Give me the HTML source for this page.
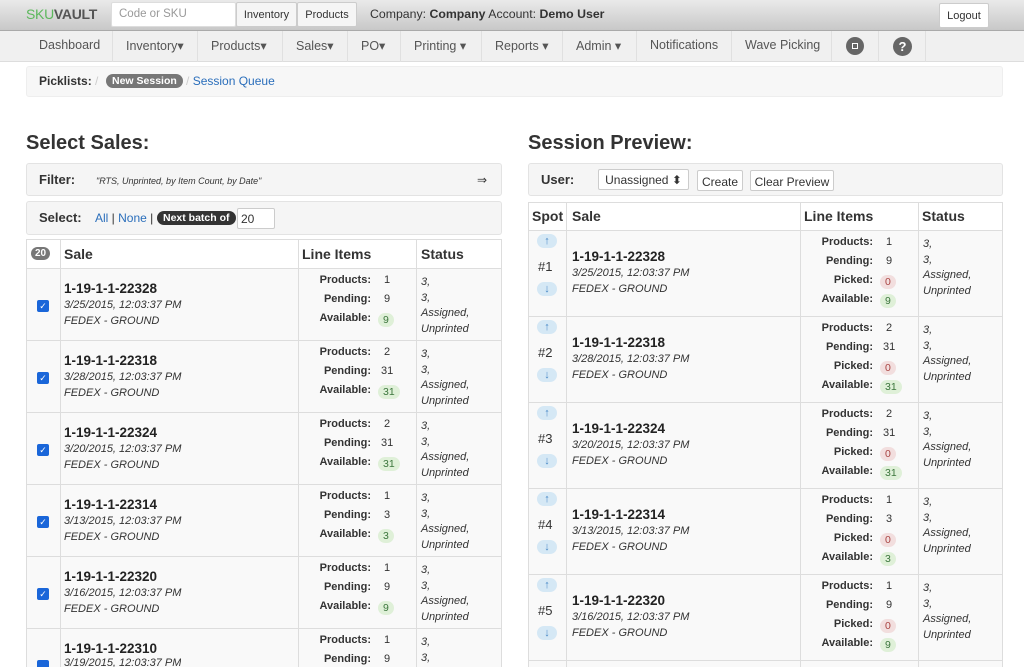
<!DOCTYPE html>
<html style="overflow:hidden;height:667px"><head><meta charset="utf-8"><style>
*{box-sizing:border-box;margin:0;padding:0}
body{width:1024px;height:667px;overflow:hidden;background:#fff;font-family:"Liberation Sans",Arial,sans-serif;color:#333;position:relative;font-size:12px}
#w{position:absolute;left:0;top:0;width:1024px;height:667px;overflow:hidden}
.a{position:absolute;white-space:nowrap}
.top{position:absolute;left:0;top:0;width:1024px;height:31px;background:linear-gradient(#eaeaea,#c8c8c8);border-bottom:1px solid #aaa}
.nav{position:absolute;left:0;top:31px;width:1024px;height:31px;background:#f0f0f0;border-bottom:1px solid #ddd}
.nav span{position:absolute;top:7px;font-size:12.5px;color:#555}
.sep{position:absolute;top:31px;width:1px;height:31px;background:#e0e0e0}
.btn{position:absolute;background:#fff;border:1px solid #ccc;font-size:11px;color:#333;text-align:center;border-radius:2px}
.well{position:absolute;background:#f5f5f5;border:1px solid #e3e3e3;border-radius:3px}
.tbl{position:absolute;border:1px solid #ddd;border-bottom:none;background:#fff}
.row{position:absolute;background:#f9f9f9;border-top:1px solid #ddd}
.vl{position:absolute;width:1px;background:#ddd}
.id{font-size:13.5px;font-weight:bold;color:#222}
.it{font-style:italic;font-size:11px;color:#333}
.lb{font-weight:bold;font-size:11px;text-align:right;width:80px}
.v{font-size:11px}
.g{background:#dff0d8;color:#3c763d;border-radius:8px;padding:1px 5px;font-size:10.5px}
.r{background:#f2dede;color:#a94442;border-radius:8px;padding:1px 5px;font-size:10.5px}
.cb{position:absolute;width:12px;height:12px;background:#1a66d9;border-radius:2px;color:#fff;font-size:9px;text-align:center;line-height:12px}
.ar{position:absolute;width:20px;height:14px;background:#d5e8f5;border-radius:7px;color:#4a8ac7;font-size:11px;text-align:center;line-height:14px}
h2{position:absolute;font-size:20px;font-weight:bold;color:#333}
</style></head><body><div id="w">
<div class="top"></div>
<div class="a" style="left:26px;top:6px;font-size:14px;font-weight:bold;letter-spacing:-0.3px"><span style="color:#5cb85c;font-weight:normal">SKU</span><span style="color:#555">VAULT</span></div>
<div class="btn" style="left:111px;top:2px;width:125px;height:25px;text-align:left;padding:5px 7px;color:#999;font-size:11.5px;border-color:#ddd">Code or SKU</div>
<div class="btn" style="left:236px;top:2px;width:61px;height:25px;padding-top:6px;background:#f5f5f5">Inventory</div>
<div class="btn" style="left:297px;top:2px;width:60px;height:25px;padding-top:6px;background:#f5f5f5">Products</div>
<div class="a" style="left:370px;top:7px;font-size:12.3px;color:#333">Company: <b>Company</b> Account: <b>Demo User</b></div>
<div class="btn" style="left:939px;top:3px;width:50px;height:25px;padding-top:6px">Logout</div>
<div class="nav"></div>
<div class="nav" style="background:none;border:none">
<span style="left:39px">Dashboard</span><span style="left:126px">Inventory▾</span><span style="left:211px">Products▾</span><span style="left:296px">Sales▾</span><span style="left:361px">PO▾</span><span style="left:414px">Printing ▾</span><span style="left:495px">Reports ▾</span><span style="left:576px">Admin ▾</span><span style="left:650px">Notifications</span><span style="left:745px">Wave Picking</span>
</div>
<div class="sep" style="left:112px"></div><div class="sep" style="left:197px"></div><div class="sep" style="left:282px"></div><div class="sep" style="left:347px"></div><div class="sep" style="left:400px"></div><div class="sep" style="left:481px"></div><div class="sep" style="left:562px"></div><div class="sep" style="left:636px"></div><div class="sep" style="left:731px"></div><div class="sep" style="left:831px"></div><div class="sep" style="left:878px"></div><div class="sep" style="left:925px"></div>
<div class="a" style="left:846px;top:37px;width:18px;height:18px;border-radius:50%;background:#666;"><div style="position:absolute;left:6px;top:6px;width:6px;height:6px;border:1.5px solid #fff"></div></div>
<div class="a" style="left:893px;top:37px;width:19px;height:19px;border-radius:50%;background:#666;color:#fff;font-weight:bold;font-size:13px;text-align:center;line-height:19px">?</div>
<div class="well" style="left:26px;top:66px;width:977px;height:31px;border-color:#eee;background:#f7f7f7"></div>
<div class="a" style="left:39px;top:74px;font-weight:bold;font-size:12px">Picklists: <span style="color:#ccc;font-weight:normal">/</span></div>
<div class="a" style="left:106px;top:74px;background:#777;color:#fff;font-weight:bold;font-size:10.5px;border-radius:8px;padding:1px 6px">New Session</div>
<div class="a" style="left:186px;top:74px;font-size:12px"><span style="color:#ccc">/</span> <span style="color:#2a6ebb">Session Queue</span></div>

<h2 style="left:26px;top:132px">Select Sales:</h2>
<h2 style="left:528px;top:132px">Session Preview:</h2>

<div class="well" style="left:26px;top:163px;width:476px;height:33px"></div>
<div class="a" style="left:39px;top:172px;font-size:13px;font-weight:bold">Filter:</div>
<div class="a" style="left:96px;top:176px;font-size:9px;font-style:italic">"RTS, Unprinted, by Item Count, by Date"</div>
<div class="a" style="left:477px;top:173px;font-size:12px">⇒</div>
<div class="well" style="left:26px;top:201px;width:476px;height:34px"></div>
<div class="a" style="left:39px;top:210px;font-size:13px;font-weight:bold">Select:</div>
<div class="a" style="left:95px;top:211px;font-size:12px"><span style="color:#2a6ebb">All</span> | <span style="color:#2a6ebb">None</span> |</div>
<div class="a" style="left:157px;top:211px;background:#333;color:#fff;font-weight:bold;font-size:10.5px;border-radius:8px;padding:1px 6px">Next batch of</div>
<div class="btn" style="left:237px;top:208px;width:38px;height:21px;text-align:left;padding:3px 3px;font-size:12px">20</div>

<div class="well" style="left:528px;top:163px;width:475px;height:33px"></div>
<div class="a" style="left:541px;top:172px;font-size:13px;font-weight:bold">User:</div>
<div class="btn" style="left:598px;top:169px;width:91px;height:21px;padding-top:3px;font-size:12px">Unassigned ⬍</div>
<div class="btn" style="left:697px;top:170px;width:46px;height:21px;padding-top:4px;font-size:12px">Create</div>
<div class="btn" style="left:750px;top:170px;width:84px;height:21px;padding-top:4px;font-size:12px">Clear Preview</div>

<!-- Left table -->
<div class="tbl" style="left:26px;top:239px;width:476px;height:428px"></div>
<div class="row" style="left:27px;top:268px;width:474px;height:72px"></div>
<div class="row" style="left:27px;top:340px;width:474px;height:72px"></div>
<div class="row" style="left:27px;top:412px;width:474px;height:72px"></div>
<div class="row" style="left:27px;top:484px;width:474px;height:72px"></div>
<div class="row" style="left:27px;top:556px;width:474px;height:72px"></div>
<div class="row" style="left:27px;top:628px;width:474px;height:39px"></div>
<div class="vl" style="left:60px;top:239px;height:428px"></div>
<div class="vl" style="left:298px;top:239px;height:428px"></div>
<div class="vl" style="left:416px;top:239px;height:428px"></div>
<div class="a" style="left:31px;top:247px;background:#777;color:#fff;font-weight:bold;font-size:10px;border-radius:8px;padding:1px 4px">20</div>
<div class="a" style="left:64px;top:246px;font-size:14px;font-weight:bold">Sale</div>
<div class="a" style="left:302px;top:246px;font-size:14px;font-weight:bold">Line Items</div>
<div class="a" style="left:421px;top:246px;font-size:14px;font-weight:bold">Status</div>

<div class="a" style="left:0;top:268px">
<div class="cb" style="left:37px;top:32px">✓</div>
<div class="a id" style="left:64px;top:13px">1-19-1-1-22328</div><div class="a it" style="left:64px;top:31px">3/25/2015, 12:03:37 PM</div><div class="a it" style="left:64px;top:47px">FEDEX - GROUND</div>
<div class="a lb" style="left:291px;top:6px">Products:</div><div class="a v" style="left:384px;top:6px">1</div>
<div class="a lb" style="left:291px;top:25px">Pending:</div><div class="a v" style="left:384px;top:25px">9</div>
<div class="a lb" style="left:291px;top:44px">Available:</div><div class="a" style="left:378px;top:44px"><span class="g">9</span></div>
<div class="a it" style="left:421px;top:7px;line-height:15.5px">3,<br>3,<br>Assigned,<br>Unprinted</div></div>
<div class="a" style="left:0;top:340px">
<div class="cb" style="left:37px;top:32px">✓</div>
<div class="a id" style="left:64px;top:13px">1-19-1-1-22318</div><div class="a it" style="left:64px;top:31px">3/28/2015, 12:03:37 PM</div><div class="a it" style="left:64px;top:47px">FEDEX - GROUND</div>
<div class="a lb" style="left:291px;top:6px">Products:</div><div class="a v" style="left:384px;top:6px">2</div>
<div class="a lb" style="left:291px;top:25px">Pending:</div><div class="a v" style="left:381px;top:25px">31</div>
<div class="a lb" style="left:291px;top:44px">Available:</div><div class="a" style="left:378px;top:44px"><span class="g">31</span></div>
<div class="a it" style="left:421px;top:7px;line-height:15.5px">3,<br>3,<br>Assigned,<br>Unprinted</div></div>
<div class="a" style="left:0;top:412px">
<div class="cb" style="left:37px;top:32px">✓</div>
<div class="a id" style="left:64px;top:13px">1-19-1-1-22324</div><div class="a it" style="left:64px;top:31px">3/20/2015, 12:03:37 PM</div><div class="a it" style="left:64px;top:47px">FEDEX - GROUND</div>
<div class="a lb" style="left:291px;top:6px">Products:</div><div class="a v" style="left:384px;top:6px">2</div>
<div class="a lb" style="left:291px;top:25px">Pending:</div><div class="a v" style="left:381px;top:25px">31</div>
<div class="a lb" style="left:291px;top:44px">Available:</div><div class="a" style="left:378px;top:44px"><span class="g">31</span></div>
<div class="a it" style="left:421px;top:7px;line-height:15.5px">3,<br>3,<br>Assigned,<br>Unprinted</div></div>
<div class="a" style="left:0;top:484px">
<div class="cb" style="left:37px;top:32px">✓</div>
<div class="a id" style="left:64px;top:13px">1-19-1-1-22314</div><div class="a it" style="left:64px;top:31px">3/13/2015, 12:03:37 PM</div><div class="a it" style="left:64px;top:47px">FEDEX - GROUND</div>
<div class="a lb" style="left:291px;top:6px">Products:</div><div class="a v" style="left:384px;top:6px">1</div>
<div class="a lb" style="left:291px;top:25px">Pending:</div><div class="a v" style="left:384px;top:25px">3</div>
<div class="a lb" style="left:291px;top:44px">Available:</div><div class="a" style="left:378px;top:44px"><span class="g">3</span></div>
<div class="a it" style="left:421px;top:7px;line-height:15.5px">3,<br>3,<br>Assigned,<br>Unprinted</div></div>
<div class="a" style="left:0;top:556px">
<div class="cb" style="left:37px;top:32px">✓</div>
<div class="a id" style="left:64px;top:13px">1-19-1-1-22320</div><div class="a it" style="left:64px;top:31px">3/16/2015, 12:03:37 PM</div><div class="a it" style="left:64px;top:47px">FEDEX - GROUND</div>
<div class="a lb" style="left:291px;top:6px">Products:</div><div class="a v" style="left:384px;top:6px">1</div>
<div class="a lb" style="left:291px;top:25px">Pending:</div><div class="a v" style="left:384px;top:25px">9</div>
<div class="a lb" style="left:291px;top:44px">Available:</div><div class="a" style="left:378px;top:44px"><span class="g">9</span></div>
<div class="a it" style="left:421px;top:7px;line-height:15.5px">3,<br>3,<br>Assigned,<br>Unprinted</div></div>
<div class="a" style="left:0;top:628px">
<div class="cb" style="left:37px;top:32px;height:7px;line-height:7px;border-radius:2px 2px 0 0"></div>
<div class="a id" style="left:64px;top:13px">1-19-1-1-22310</div><div class="a it" style="left:64px;top:29px;height:10px;overflow:hidden">3/19/2015, 12:03:37 PM</div>
<div class="a lb" style="left:291px;top:6px">Products:</div><div class="a v" style="left:384px;top:6px">1</div>
<div class="a lb" style="left:291px;top:25px">Pending:</div><div class="a v" style="left:384px;top:25px">9</div>
<div class="a it" style="left:421px;top:7px;line-height:15.5px">3,<br>3,</div></div>

<!-- Right table -->
<div class="tbl" style="left:528px;top:202px;width:475px;height:465px"></div>
<div class="row" style="left:529px;top:230px;width:473px;height:86px"></div>
<div class="row" style="left:529px;top:316px;width:473px;height:86px"></div>
<div class="row" style="left:529px;top:402px;width:473px;height:86px"></div>
<div class="row" style="left:529px;top:488px;width:473px;height:86px"></div>
<div class="row" style="left:529px;top:574px;width:473px;height:86px"></div>
<div class="row" style="left:529px;top:660px;width:473px;height:7px"></div>
<div class="vl" style="left:566px;top:202px;height:465px"></div>
<div class="vl" style="left:800px;top:202px;height:465px"></div>
<div class="vl" style="left:918px;top:202px;height:465px"></div>
<div class="a" style="left:532px;top:208px;font-size:14px;font-weight:bold">Spot</div>
<div class="a" style="left:572px;top:208px;font-size:14px;font-weight:bold">Sale</div>
<div class="a" style="left:804px;top:208px;font-size:14px;font-weight:bold">Line Items</div>
<div class="a" style="left:922px;top:208px;font-size:14px;font-weight:bold">Status</div>

<div class="a" style="left:0;top:230px">
<div class="ar" style="left:537px;top:4px">↑</div><div class="a" style="left:538px;top:29px;font-size:13px">#1</div><div class="ar" style="left:537px;top:52px">↓</div>
<div class="a id" style="left:572px;top:19px">1-19-1-1-22328</div><div class="a it" style="left:572px;top:37px">3/25/2015, 12:03:37 PM</div><div class="a it" style="left:572px;top:53px">FEDEX - GROUND</div>
<div class="a lb" style="left:793px;top:6px">Products:</div><div class="a v" style="left:886px;top:6px">1</div>
<div class="a lb" style="left:793px;top:25px">Pending:</div><div class="a v" style="left:886px;top:25px">9</div>
<div class="a lb" style="left:793px;top:44px">Picked:</div><div class="a" style="left:880px;top:44px"><span class="r">0</span></div>
<div class="a lb" style="left:793px;top:63px">Available:</div><div class="a" style="left:880px;top:63px"><span class="g">9</span></div>
<div class="a it" style="left:923px;top:7px;line-height:15.5px">3,<br>3,<br>Assigned,<br>Unprinted</div></div>
<div class="a" style="left:0;top:316px">
<div class="ar" style="left:537px;top:4px">↑</div><div class="a" style="left:538px;top:29px;font-size:13px">#2</div><div class="ar" style="left:537px;top:52px">↓</div>
<div class="a id" style="left:572px;top:19px">1-19-1-1-22318</div><div class="a it" style="left:572px;top:37px">3/28/2015, 12:03:37 PM</div><div class="a it" style="left:572px;top:53px">FEDEX - GROUND</div>
<div class="a lb" style="left:793px;top:6px">Products:</div><div class="a v" style="left:886px;top:6px">2</div>
<div class="a lb" style="left:793px;top:25px">Pending:</div><div class="a v" style="left:883px;top:25px">31</div>
<div class="a lb" style="left:793px;top:44px">Picked:</div><div class="a" style="left:880px;top:44px"><span class="r">0</span></div>
<div class="a lb" style="left:793px;top:63px">Available:</div><div class="a" style="left:880px;top:63px"><span class="g">31</span></div>
<div class="a it" style="left:923px;top:7px;line-height:15.5px">3,<br>3,<br>Assigned,<br>Unprinted</div></div>
<div class="a" style="left:0;top:402px">
<div class="ar" style="left:537px;top:4px">↑</div><div class="a" style="left:538px;top:29px;font-size:13px">#3</div><div class="ar" style="left:537px;top:52px">↓</div>
<div class="a id" style="left:572px;top:19px">1-19-1-1-22324</div><div class="a it" style="left:572px;top:37px">3/20/2015, 12:03:37 PM</div><div class="a it" style="left:572px;top:53px">FEDEX - GROUND</div>
<div class="a lb" style="left:793px;top:6px">Products:</div><div class="a v" style="left:886px;top:6px">2</div>
<div class="a lb" style="left:793px;top:25px">Pending:</div><div class="a v" style="left:883px;top:25px">31</div>
<div class="a lb" style="left:793px;top:44px">Picked:</div><div class="a" style="left:880px;top:44px"><span class="r">0</span></div>
<div class="a lb" style="left:793px;top:63px">Available:</div><div class="a" style="left:880px;top:63px"><span class="g">31</span></div>
<div class="a it" style="left:923px;top:7px;line-height:15.5px">3,<br>3,<br>Assigned,<br>Unprinted</div></div>
<div class="a" style="left:0;top:488px">
<div class="ar" style="left:537px;top:4px">↑</div><div class="a" style="left:538px;top:29px;font-size:13px">#4</div><div class="ar" style="left:537px;top:52px">↓</div>
<div class="a id" style="left:572px;top:19px">1-19-1-1-22314</div><div class="a it" style="left:572px;top:37px">3/13/2015, 12:03:37 PM</div><div class="a it" style="left:572px;top:53px">FEDEX - GROUND</div>
<div class="a lb" style="left:793px;top:6px">Products:</div><div class="a v" style="left:886px;top:6px">1</div>
<div class="a lb" style="left:793px;top:25px">Pending:</div><div class="a v" style="left:886px;top:25px">3</div>
<div class="a lb" style="left:793px;top:44px">Picked:</div><div class="a" style="left:880px;top:44px"><span class="r">0</span></div>
<div class="a lb" style="left:793px;top:63px">Available:</div><div class="a" style="left:880px;top:63px"><span class="g">3</span></div>
<div class="a it" style="left:923px;top:7px;line-height:15.5px">3,<br>3,<br>Assigned,<br>Unprinted</div></div>
<div class="a" style="left:0;top:574px">
<div class="ar" style="left:537px;top:4px">↑</div><div class="a" style="left:538px;top:29px;font-size:13px">#5</div><div class="ar" style="left:537px;top:52px">↓</div>
<div class="a id" style="left:572px;top:19px">1-19-1-1-22320</div><div class="a it" style="left:572px;top:37px">3/16/2015, 12:03:37 PM</div><div class="a it" style="left:572px;top:53px">FEDEX - GROUND</div>
<div class="a lb" style="left:793px;top:6px">Products:</div><div class="a v" style="left:886px;top:6px">1</div>
<div class="a lb" style="left:793px;top:25px">Pending:</div><div class="a v" style="left:886px;top:25px">9</div>
<div class="a lb" style="left:793px;top:44px">Picked:</div><div class="a" style="left:880px;top:44px"><span class="r">0</span></div>
<div class="a lb" style="left:793px;top:63px">Available:</div><div class="a" style="left:880px;top:63px"><span class="g">9</span></div>
<div class="a it" style="left:923px;top:7px;line-height:15.5px">3,<br>3,<br>Assigned,<br>Unprinted</div></div>
</div></body></html>
